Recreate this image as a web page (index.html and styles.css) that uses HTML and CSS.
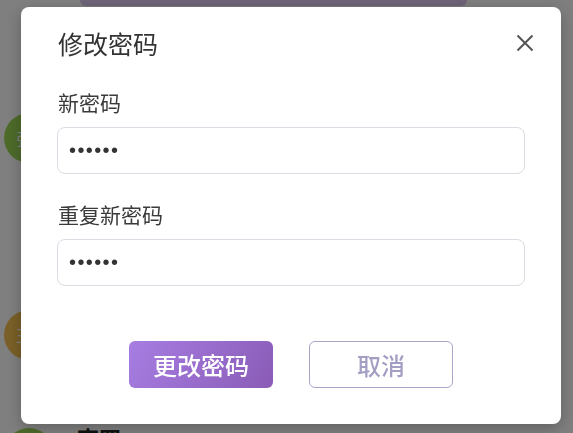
FILE: index.html
```html
<!DOCTYPE html>
<html lang="zh-CN">
<head>
  <meta charset="UTF-8" />
  <title>修改密码</title>
  <meta name="viewport" content="width=device-width, initial-scale=1.0" />
  <link rel="stylesheet" href="styles.css">
</head>
<body>
  <div class="app">
    <div class="topbar"></div>
    <div class="messages">
      <div class="msg first">
        <div class="avatar green">张</div>
        <div class="msg-body">
          <div class="bubble tall"></div>
        </div>
      </div>
      <div class="msg second">
        <div class="avatar orange">王</div>
        <div class="msg-body">
          <div class="bubble mid"></div>
        </div>
      </div>
      <div class="msg">
        <div class="avatar green"></div>
        <div class="msg-body">
          <div class="msg-meta"><span class="name">李四</span><span class="time">10:59</span></div>
        </div>
      </div>
    </div>
  </div>

  <div class="overlay">
    <div class="modal">
      <div class="modal-header">
        <h2 class="modal-title">修改密码</h2>
        <button class="close-btn" aria-label="关闭">
          <svg width="18" height="18" viewBox="0 0 18 18">
            <path d="M1.5 1.5 L16.5 16.5 M16.5 1.5 L1.5 16.5" stroke="#555" stroke-width="2" fill="none"/>
          </svg>
        </button>
      </div>

      <div class="form-group first">
        <label for="new-password">新密码</label>
        <input id="new-password" type="password" value="123456">
      </div>
      <div class="form-group">
        <label for="repeat-password">重复新密码</label>
        <input id="repeat-password" type="password" value="123456">
      </div>

      <div class="modal-actions">
        <button class="btn btn-primary">更改密码</button>
        <button class="btn btn-cancel">取消</button>
      </div>
    </div>
  </div>
</body>
</html>
```

FILE: styles.css
```css
* {
  box-sizing: border-box;
}
body {
  margin: 0;
  font-family: "Noto Sans CJK SC", "Noto Sans", sans-serif;
  background: #ffffff;
  overflow: hidden;
}
.app {
  height: 433px;
  overflow: hidden;
}
.topbar {
  margin-left: 80px;
  width: 387px;
  height: 6px;
  background: #dec8f2;
  border-radius: 0 0 12px 12px;
}
.messages {
  padding: 107px 0 0 4px;
}
.msg {
  display: flex;
  gap: 23px;
}
.avatar {
  width: 50px;
  height: 50px;
  border-radius: 50%;
  flex-shrink: 0;
  color: #fff;
  font-size: 16px;
  line-height: 50px;
  text-align: left;
  padding-left: 12px;
}
.green {
  background: #9cd654;
}
.orange {
  background: #f4c050;
}
.msg-meta {
  margin-top: -6px;
}
.msg-meta .name {
  font-size: 22px;
  font-weight: bold;
  color: #222;
  line-height: 30px;
}
.msg-meta .time {
  margin-left: 8px;
  font-size: 18px;
  color: #888;
}
.bubble {
  width: 300px;
  background: #f2f2f2;
  border-radius: 8px;
}
.bubble.tall {
  height: 130px;
}
.bubble.mid {
  height: 60px;
}
.msg.first {
  margin-bottom: 67px;
}
.msg.second {
  margin-bottom: 58px;
}

.overlay {
  position: fixed;
  inset: 0;
  background: rgba(0, 0, 0, 0.5);
  padding: 7px 0 0 21px;
}
.modal {
  width: 540px;
  height: 417px;
  background: #fff;
  border-radius: 8px;
  padding: 18px 36px 0 36px;
  box-shadow: 0 4px 16px rgba(0, 0, 0, 0.25);
}
.modal-header {
  display: flex;
  justify-content: space-between;
  align-items: center;
  height: 36px;
}
.modal-title {
  margin: 0;
  padding-left: 1px;
  font-size: 25px;
  font-weight: normal;
  color: #333;
  line-height: 36px;
}
.close-btn {
  border: none;
  background: none;
  padding: 0;
  margin-right: -9px;
  width: 18px;
  height: 18px;
  cursor: pointer;
}
.form-group {
  margin-top: 25px;
}
.form-group.first {
  margin-top: 26px;
}
.form-group label {
  display: block;
  padding-left: 1px;
  font-size: 21px;
  line-height: 30px;
  color: #3a3a3a;
  margin-bottom: 10px;
}
.form-group input {
  display: block;
  width: 100%;
  height: 47px;
  border: 1px solid #dcdce4;
  border-radius: 8px;
  padding: 0 11px;
  font-family: "Liberation Sans", sans-serif;
  font-size: 20px;
  letter-spacing: 1.4px;
  color: #333;
  outline: none;
}
.form-group + .form-group input {
  margin-top: 1px;
}
.modal-actions {
  display: flex;
  justify-content: center;
  gap: 36px;
  margin-top: 55px;
}
.btn {
  width: 144px;
  height: 47px;
  border-radius: 6px;
  font-family: "Noto Sans CJK SC", sans-serif;
  font-size: 24px;
  font-weight: 500;
  cursor: pointer;
}
.btn-primary {
  border: none;
  color: #fff;
  background: linear-gradient(120deg, #a77de2, #8a5cb7);
}
.btn-cancel {
  background: #fff;
  border: 1px solid #aaa6ca;
  color: #a39fc4;
}
```
